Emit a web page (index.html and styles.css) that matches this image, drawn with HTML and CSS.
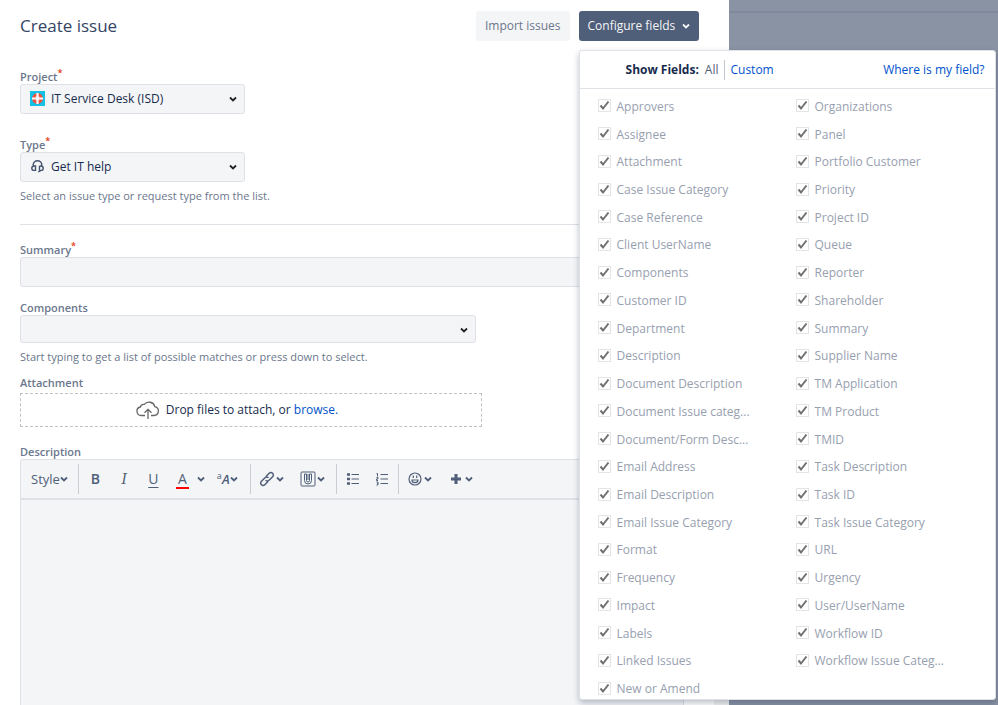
FILE: index.html
```html
<!DOCTYPE html>
<html lang="en">

<head>
    <meta charset="UTF-8">
    <meta name="viewport" content="width=device-width, initial-scale=1.0">
    <title>Create issue</title>
    <link rel="stylesheet" href="styles.css">
</head>

<body>
    <svg class="sprite" aria-hidden="true">
        <symbol id="chevron" viewBox="0 0 8 8">
            <path d="M1 2.5 4 5.5 7 2.5" fill="none" stroke="currentColor" stroke-width="1.8" />
        </symbol>
    </svg>

    <div class="blanket"></div>

    <main class="dialog">
        <header class="dialog-header">
            <h1>Create issue</h1>
            <div class="header-actions">
                <button class="btn" type="button">Import issues</button>
                <div class="dropdown">
                    <button class="btn btn-active" type="button" aria-expanded="true">Configure fields
                        <svg class="chevron"><use href="#chevron" /></svg>
                    </button>
                    <section class="menu">
                        <div class="menu-header">
                            <strong>Show Fields:</strong>
                            <span class="menu-all">All</span>
                            <a class="menu-custom" href="#">Custom</a>
                            <a class="menu-help" href="#">Where is my field?</a>
                        </div>
                        <div class="field-list" id="field-list"></div>
                    </section>
                </div>
            </div>
        </header>

        <form class="form">
            <div class="field field-project">
                <label for="project">Project<sup>*</sup></label>
                <div class="select-box select-short">
                    <svg class="select-icon" viewBox="0 0 15 15">
                        <rect width="15" height="15" fill="#14c0e4" />
                        <circle cx="7.5" cy="7.5" r="3.5" fill="#fff" />
                        <circle cx="7.5" cy="7.5" r="3.9" fill="none" stroke="#f0503c" stroke-width="3" />
                        <path d="M7.5 2v3M7.5 10v3M2 7.5h3M10 7.5h3" stroke="#fff" stroke-width="2.2" />
                    </svg>
                    <select id="project" class="with-icon">
                        <option>IT Service Desk (ISD)</option>
                    </select>
                    <svg class="chevron"><use href="#chevron" /></svg>
                </div>
            </div>

            <div class="field">
                <label for="type">Type<sup>*</sup></label>
                <div class="select-box select-short">
                    <svg class="select-icon" viewBox="0 0 15 15" fill="none" stroke="#42526e" stroke-width="1.4">
                        <path d="M3.2 7V6a4.3 4.3 0 0 1 8.6 0v1M5.500 7v4.400H4A2.200 2.200 0 0 1 4 7zM9.500 7v4.400M9.500 7H11a2.200 2.200 0 0 1 0 4.400L8.200 13" />
                    </svg>
                    <select id="type" class="with-icon">
                        <option>Get IT help</option>
                    </select>
                    <svg class="chevron"><use href="#chevron" /></svg>
                </div>
                <p class="hint">Select an issue type or request type from the list.</p>
            </div>

            <hr>

            <div class="field field-summary">
                <label for="summary">Summary<sup>*</sup></label>
                <input id="summary" type="text">
            </div>

            <div class="field field-components">
                <label for="components">Components</label>
                <div class="select-box select-long">
                    <select id="components">
                        <option></option>
                    </select>
                    <svg class="chevron"><use href="#chevron" /></svg>
                </div>
                <p class="hint">Start typing to get a list of possible matches or press down to select.</p>
            </div>

            <div class="field field-attachment">
                <span class="label">Attachment</span>
                <div class="drop-zone">
                    <svg class="cloud" viewBox="0 0 24 20" fill="none" stroke="#666" stroke-width="1.3">
                        <path d="M9 15.5H5.5A4.3 4.3 0 0 1 4.4 7 3.5 3.5 0 0 1 8.3 4.4 6 6 0 0 1 18.8 6.600 4.500 4.500 0 0 1 18 15.500H15M12 19V9.500M8.500 12.800 12 9.300l3.500 3.500" />
                    </svg>
                    <span>Drop files to attach, or <a href="#">browse.</a></span>
                </div>
            </div>

            <div class="field field-description">
                <label for="description">Description</label>
                <div class="editor">
                    <div class="toolbar">
                        <div class="group group-style">
                            <button type="button">Style<svg class="chevron"><use href="#chevron" /></svg></button>
                        </div>
                        <div class="group group-text">
                            <button type="button" class="letter bold" aria-label="Bold">B</button>
                            <button type="button" class="letter italic" aria-label="Italic">I</button>
                            <button type="button" class="letter underline" aria-label="Underline">U</button>
                            <button type="button" aria-label="Text color"><span class="letter color-letter">A</span><svg class="chevron"><use href="#chevron" /></svg></button>
                            <button type="button" class="more-format" aria-label="More formatting"><span class="small-a">a</span><i>A</i><svg class="chevron"><use href="#chevron" /></svg></button>
                        </div>
                        <div class="group group-insert">
                            <button type="button" aria-label="Link">
                                <svg class="icon" viewBox="0 0 16 16" fill="none" stroke="currentColor" stroke-width="1.5">
                                    <path d="m7 5.500 3.200-3.200a2.300 2.300 0 0 1 3.400 3.400L10 9.300a2.300 2.300 0 0 1-3.400 0M9 10.500l-3.200 3.200a2.300 2.300 0 0 1-3.400-3.400L6 6.700a2.300 2.300 0 0 1 3.400 0" />
                                </svg>
                                <svg class="chevron"><use href="#chevron" /></svg>
                            </button>
                            <button type="button" aria-label="Attach">
                                <svg class="icon" viewBox="0 0 16 16" fill="none" stroke="currentColor">
                                    <rect x="1" y="1" width="14" height="14" rx="1" />
                                    <path d="M4.500 3v6.500a3.500 3.500 0 0 0 7 0V3H9.500v6.500a1.500 1.500 0 0 1-3 0V3zM8 3v6" />
                                </svg>
                                <svg class="chevron"><use href="#chevron" /></svg>
                            </button>
                        </div>
                        <div class="group group-list">
                            <button type="button" aria-label="Bullet list">
                                <svg class="icon" viewBox="0 0 16 16" stroke="currentColor">
                                    <path d="M2 3.500h3M2 8h3M2 12.500h3" stroke-width="2.600" />
                                    <path d="M6.500 3.500H14M6.500 8H14M6.500 12.500H14" />
                                </svg>
                            </button>
                            <button type="button" aria-label="Numbered list">
                                <svg class="icon" viewBox="0 0 16 16" stroke="currentColor" fill="none">
                                    <path d="M6.500 3.500H14M6.500 8H14M6.500 12.500H14" />
                                    <path d="M2.500 2.500h1v3M2.500 6.500h1.500v1.500H2.500v1.500H4M2.500 11h1.500v3H2.500M3 12.500h1" />
                                </svg>
                            </button>
                        </div>
                        <div class="group group-extra">
                            <button type="button" aria-label="Emoji">
                                <svg class="icon" viewBox="0 0 16 16" fill="none" stroke="currentColor" stroke-width="1.200">
                                    <circle cx="8" cy="8" r="6" />
                                    <path d="M5 9a3 2.600 0 0 0 6 0zM6.300 4.500v2.500M9.700 4.500v2.500" />
                                </svg>
                                <svg class="chevron"><use href="#chevron" /></svg>
                            </button>
                            <button type="button" aria-label="Insert more">
                                <svg class="icon" viewBox="0 0 16 16" stroke="currentColor" stroke-width="3">
                                    <path d="M8 3v10M3 8h10" />
                                </svg>
                                <svg class="chevron"><use href="#chevron" /></svg>
                            </button>
                        </div>
                    </div>
                    <textarea id="description"></textarea>
                </div>
            </div>
        </form>
    </main>

    <script>
        const fields = [
            'Approvers', 'Assignee', 'Attachment', 'Case Issue Category', 'Case Reference',
            'Client UserName', 'Components', 'Customer ID', 'Department', 'Description',
            'Document Description', 'Document Issue categ...', 'Document/Form Desc...',
            'Email Address', 'Email Description', 'Email Issue Category', 'Format',
            'Frequency', 'Impact', 'Labels', 'Linked Issues', 'New or Amend',
            'Organizations', 'Panel', 'Portfolio Customer', 'Priority', 'Project ID', 'Queue',
            'Reporter', 'Shareholder', 'Summary', 'Supplier Name', 'TM Application',
            'TM Product', 'TMID', 'Task Description', 'Task ID', 'Task Issue Category', 'URL',
            'Urgency', 'User/UserName', 'Workflow ID', 'Workflow Issue Categ...'
        ];
        const list = document.getElementById('field-list');

        fields.forEach((name) => {
            const label = document.createElement('label');
            const box = document.createElement('input');
            box.type = 'checkbox';
            box.checked = true;
            box.disabled = true;
            label.append(box, name);
            list.appendChild(label);
        });
    </script>
</body>

</html>
```
FILE: styles.css
```css
* {
    margin: 0;
    padding: 0;
    box-sizing: border-box;
}

body {
    height: 100vh;
    overflow: hidden;
    background: #8993a4;
    color: #172b4d;
    font-family: "Open Sans", "Noto Sans", sans-serif;
    font-size: 12px;
    line-height: 20px;
}

button,
input,
select,
textarea {
    font: inherit;
    color: inherit;
}

button {
    border: none;
    background: none;
    cursor: pointer;
}

a {
    color: #0052cc;
    text-decoration: none;
}

.sprite {
    position: absolute;
    width: 0;
    height: 0;
}

.blanket {
    position: absolute;
    top: 0;
    left: 0;
    width: 100%;
    height: 13px;
    border-bottom: 2px solid #7f899b;
}

.chevron {
    width: 8px;
    height: 8px;
    flex: none;
}

.dialog {
    position: relative;
    display: flex;
    flex-direction: column;
    width: 73%;
    height: 100%;
    background: #fff;
}

.dialog-header {
    display: flex;
    justify-content: space-between;
    padding: 11px 30px 0 20px;
}

.dialog-header h1 {
    font-size: 17px;
    font-weight: 400;
    line-height: 30px;
    color: #344563;
}

.header-actions {
    display: flex;
    gap: 9px;
}

.btn {
    height: 30px;
    padding: 0 9px;
    border-radius: 3px;
    background: #f4f5f7;
    color: #6b778c;
}

.btn-active {
    display: flex;
    align-items: center;
    justify-content: space-between;
    min-width: 120px;
    background: #505f79;
    color: #f4f5f7;
}

.dropdown {
    position: relative;
}

.menu {
    position: absolute;
    z-index: 2;
    top: 39px;
    left: 0;
    display: flex;
    flex-direction: column;
    width: 417px;
    height: calc(100vh - 55px);
    border: 1px solid #dfe1e6;
    border-radius: 3px;
    background: #fff;
    box-shadow: 0 3px 6px rgba(9, 30, 66, 0.28);
    overflow: hidden;
}

.menu-header {
    display: flex;
    align-items: center;
    height: 38px;
    flex: none;
    padding: 0 10px 0 46px;
    border-bottom: 1px solid #dfe1e6;
}

.menu-all {
    margin-left: 6px;
    padding-right: 6px;
    border-right: 1px solid #c1c7d0;
    color: #505f79;
}

.menu-custom {
    margin-left: 5px;
}

.menu-help {
    margin-left: auto;
}

.field-list {
    flex: 1;
    display: grid;
    grid-template-columns: 198px 1fr;
    grid-template-rows: repeat(22, 1fr);
    grid-auto-flow: column;
    padding-left: 18px;
}

.field-list label {
    display: flex;
    align-items: center;
    gap: 6px;
    padding-top: 8px;
    line-height: 18px;
    color: #97a0af;
}

.field-list input {
    appearance: none;
    width: 13px;
    height: 13px;
    margin-bottom: 2px;
    border: 1px solid #e4e4e4;
    background: url("data:image/svg+xml,%3Csvg xmlns='http://www.w3.org/2000/svg' viewBox='0 0 11 11'%3E%3Cpath d='M1.500 5.500 4 8.500 9.500 1.500' fill='none' stroke='%23707070' stroke-width='2'/%3E%3C/svg%3E");
}

.form {
    flex: 1;
    min-height: 0;
    display: flex;
    flex-direction: column;
    padding: 29px 30px 0 20px;
    border-right: 15px solid #f1f1f1;
    border-image: linear-gradient(#fff 10px, #f1f1f1 10px) 1;
    overflow: hidden;
}

.field label,
.label {
    display: block;
    font-size: 11px;
    font-weight: 600;
    line-height: 14px;
    color: #6b778c;
}

sup {
    color: #de350b;
    line-height: 0;
}

.field-project {
    margin-bottom: 24px;
}

.select-box {
    position: relative;
}

.select-short {
    width: 225px;
}

.select-long {
    width: 456px;
}

.select-box .chevron {
    position: absolute;
    top: 11px;
    right: 8px;
    color: #222;
    pointer-events: none;
}

.select-icon {
    position: absolute;
    top: 7px;
    left: 10px;
    width: 15px;
    height: 15px;
}

select,
.field input {
    display: block;
    width: 100%;
    height: 30px;
    padding: 0 8px;
    appearance: none;
    border: 1px solid #dfe1e6;
    border-radius: 3px;
    background: #f4f5f7;
}

.select-long select {
    height: 28px;
}

.with-icon {
    padding-left: 30px;
}

.hint {
    margin-top: 6px;
    font-size: 11px;
    line-height: 16px;
    color: #6b778c;
}

hr {
    flex: none;
    margin: 20px 0 18px;
    border: none;
    border-top: 1px solid #dfe1e6;
}

.field-summary {
    margin-bottom: 14px;
}

.field-components {
    margin-bottom: 11px;
}

.field-attachment {
    margin-bottom: 18px;
}

.drop-zone {
    display: flex;
    align-items: center;
    justify-content: center;
    gap: 6px;
    width: 462px;
    height: 34px;
    margin-top: 3px;
    padding-right: 28px;
    border: 1px dashed #c1c1c1;
}

.cloud {
    width: 24px;
    height: 20px;
}

.field-description {
    flex: 1;
    display: flex;
    flex-direction: column;
}

.editor {
    flex: 1;
    display: flex;
    flex-direction: column;
    border: 1px solid #dfe1e6;
    border-bottom: none;
    border-radius: 3px 3px 0 0;
    background: #f4f5f7;
}

.toolbar {
    display: flex;
    align-items: center;
    height: 40px;
    flex: none;
    border-bottom: 2px solid #dfe1e6;
    color: #505f79;
}

.group {
    display: flex;
    align-items: center;
    height: 30px;
}

.group + .group {
    border-left: 1px solid #c9cdd4;
}

.group button {
    display: flex;
    align-items: center;
    justify-content: center;
}

.group-style {
    padding: 0 10px;
}

.group-text {
    gap: 16px;
    padding: 0 12px 0 10px;
}

.group-insert {
    gap: 16px;
    padding: 0 11px 0 8px;
}

.group-list {
    gap: 12px;
    padding: 0 7px 0 8px;
}

.group-extra {
    gap: 16px;
    padding: 0 8px;
}

.icon {
    width: 16px;
    height: 16px;
    margin-right: 1px;
}

.group-style button {
    font-size: 13px;
}

.letter {
    width: 13px;
    font-size: 14px;
    text-align: center;
}

.bold {
    font-weight: 600;
}

.italic {
    font-family: "DejaVu Serif", serif;
    font-style: italic;
}

.underline {
    text-decoration: underline;
    text-underline-offset: 3px;
}

.color-letter {
    margin-right: 8px;
    border-bottom: 2px solid #f00;
    line-height: 17px;
}

.more-format {
    margin-left: -4px;
}

.more-format i {
    font-size: 13px;
    font-weight: 600;
}

.small-a {
    padding-bottom: 6px;
    font-size: 9px;
    line-height: 12px;
}

textarea {
    flex: 1;
    width: 100%;
    padding: 8px;
    border: none;
    background: none;
    resize: none;
}
```
